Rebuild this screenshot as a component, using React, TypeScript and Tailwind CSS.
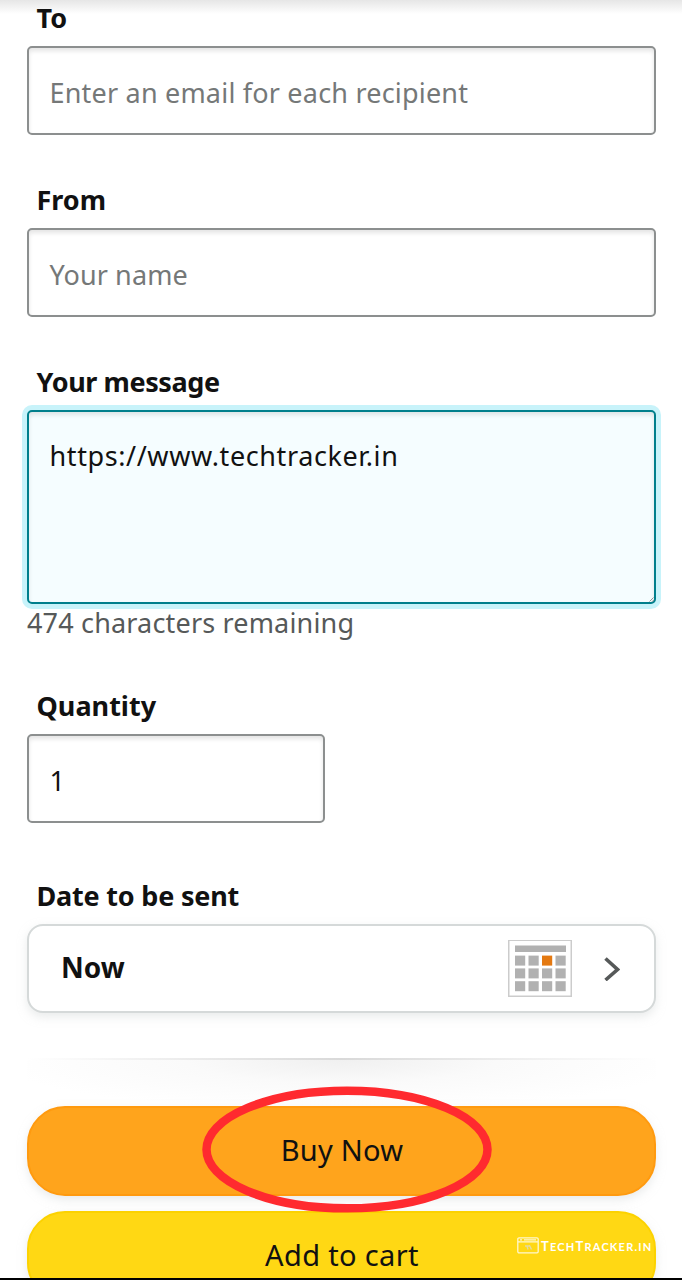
import type { ReactNode } from "react";

function Label({ children, className = "" }: { children: ReactNode; className?: string }) {
  return (
    <div className={`relative h-9 shrink-0 pl-[10px] text-[27px] leading-9 font-bold whitespace-nowrap text-[#111] ${className}`}>
      {children}
    </div>
  );
}

const box =
  "flex shrink-0 rounded-[5px] border-2 border-[#8c8f8f] bg-white shadow-[inset_0_3px_4px_rgba(15,17,17,0.11)]";

const dayCells = Array.from({ length: 12 }, (_, i) => i);

function CalendarIcon() {
  return (
    <svg className="h-[58px] w-16 shrink-0" viewBox="0 0 64 58">
      <rect x="0.75" y="0.25" width="62.5" height="56" fill="#fff" stroke="#ccc" strokeWidth="1.5" />
      <rect x="7" y="5.5" width="51" height="6.5" fill="#b1b1b1" />
      {dayCells.map((i) => (
        <rect
          key={i}
          x={7 + (i % 4) * 13.5}
          y={15.6 + Math.floor(i / 4) * 12.8}
          width="10.2"
          height="10"
          fill={i === 2 ? "#e47911" : "#b1b1b1"}
        />
      ))}
    </svg>
  );
}

function Watermark() {
  return (
    <div className="absolute top-[1235px] left-[517px] flex items-center text-white">
      <svg className="h-[17px] w-[22px]" viewBox="0 0 22 17" fill="none" stroke="#fff7cf" strokeWidth="1.3">
        <rect x="0.8" y="0.8" width="20.4" height="15" rx="1.2" />
        <path d="M1 4.8h20M3 2.8h2M7 2.8h12" />
        <path d="M8 9h5M10 9l1 3.5M12.5 8.5l2 4" stroke="#e3d9a0" strokeWidth="1.4" />
      </svg>
      <span className="ml-[2px] mt-[3px] font-[Lato] text-[11px] leading-4 font-bold tracking-[1.2px] whitespace-nowrap">
        <span className="text-[13px]">T</span>ECH<span className="text-[13px]">T</span>RACKER.IN
      </span>
    </div>
  );
}

export default function App() {
  return (
    <div className="relative flex h-[1280px] w-[682px] flex-col overflow-hidden bg-white px-[26.5px] font-['Noto_Sans',sans-serif] text-[27px] text-[#111]">
      <div className="absolute inset-x-0 top-0 h-[14px] bg-linear-to-b from-[#e6e6e6] to-transparent" />

      <Label>To</Label>
      <div className={`${box} mt-[10px] h-[89px] items-center pl-[21px] text-[#757878]`}>
        <span className="mt-[6px] tracking-[0.2px] whitespace-nowrap">Enter an email for each recipient</span>
      </div>

      <Label className="mt-[47px]">From</Label>
      <div className={`${box} mt-[10px] h-[89px] items-center pl-[21px] text-[#757878]`}>
        <span className="mt-[6px] tracking-[0.1px] whitespace-nowrap">Your name</span>
      </div>

      <Label className="mt-[47px] tracking-[-0.4px]">Your message</Label>
      <div className="mt-[10px] flex h-[194px] shrink-0 rounded-[5px] border-2 border-[#007f8c] bg-[#f5fdff] pt-[24px] pl-[21px] shadow-[0_0_0_5px_#c8f3fa,inset_0_3px_4px_rgba(15,17,17,0.1)]">
        <span className="h-10 leading-10 tracking-[0.6px] whitespace-nowrap">https://www.techtracker.in</span>
        <svg className="mt-auto ml-auto size-[5px]" viewBox="0 0 5 5" stroke="#777" strokeWidth="0.8">
          <path d="M0.5 4.5l4-4M3 4.8l1.8-1.8" />
        </svg>
      </div>
      <div className="h-[38px] shrink-0 pl-[0.5px] leading-[38px] tracking-[0.17px] whitespace-nowrap text-[#565959]">
        474 characters remaining
      </div>

      <Label className="mt-[46px]">Quantity</Label>
      <div className={`${box} mt-[10px] h-[89px] w-[298px] items-center pl-[21px]`}>
        <span className="mt-[6px]">1</span>
      </div>

      <Label className="mt-[55px] tracking-[-0.2px]">Date to be sent</Label>
      <div className="mt-[10px] flex h-[89px] shrink-0 items-center rounded-[16px] border-2 border-[#d5d9d9] bg-white pr-[34px] pl-[32.5px] shadow-[0_4px_10px_rgba(213,217,217,0.5)]">
        <span className="mb-[4px] text-[28px] font-bold">Now</span>
        <span className="ml-auto flex items-center">
          <CalendarIcon />
          <svg className="ml-[32px] h-6 w-4" viewBox="0 0 16 24" fill="none" stroke="#565959" strokeWidth="3.6">
            <path d="M1.5 1.5L13.5 12.5L1.5 23" />
          </svg>
        </span>
      </div>

      <div className="mt-[45px] h-[1.5px] shrink-0 bg-linear-to-r from-transparent via-[#d9d9d9] to-transparent" />
      <div className="h-[46px] shrink-0 bg-[radial-gradient(ellipse_55%_110%_at_50%_0%,#f0f0f0_0%,#fafafa_45%,#ffffff_100%)]" />
      <div className="flex h-[90px] shrink-0 items-center justify-center rounded-[38px] border-2 border-[#ff9a0f] bg-[#ffa41c] pb-[2px] pl-[2px] text-[29px] tracking-[0.25px] shadow-[0_4px_10px_rgba(213,217,217,0.5)]">
        Buy Now
      </div>
      <div className="mt-[15.5px] flex h-[90px] shrink-0 items-center justify-center rounded-[38px] border-2 border-[#fcd200] bg-[#ffd814] pb-[3px] pl-[2px] text-[29px] tracking-[0.35px] shadow-[0_4px_10px_rgba(213,217,217,0.5)]">
        Add to cart
      </div>

      <svg className="absolute top-[1086px] left-[202px] h-[128px] w-[290px]" viewBox="0 0 290 128" fill="none">
        <ellipse cx="145" cy="63.5" rx="140.5" ry="58.8" stroke="#ff2a2f" strokeWidth="8.5" />
      </svg>
      <Watermark />
      <div className="absolute inset-x-0 bottom-0 h-[2px] bg-black" />
    </div>
  );
}
